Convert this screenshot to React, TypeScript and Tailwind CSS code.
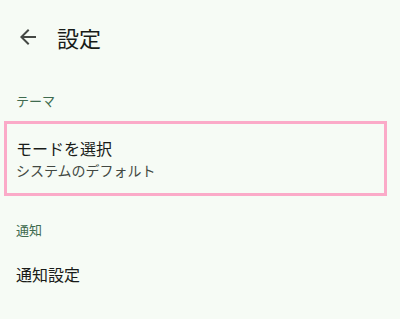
const font = { fontFamily: '"Noto Sans CJK JP", "Noto Sans", sans-serif' };

const BackArrow = () => (
  <svg viewBox="0 0 24 24" className="w-6 h-6" fill="#444844">
    <path d="M20 11H7.83l5.59-5.59L12 4l-8 8 8 8 1.41-1.41L7.83 13H20v-2z" />
  </svg>
);

export default function App() {
  return (
    <div className="w-[400px] h-[319px] bg-[#f6fbf5] overflow-hidden" style={font}>
      {/* top bar */}
      <div className="h-[74px] flex items-center pl-4">
        <BackArrow />
        <h1 className="ml-[17px] text-[22px] leading-7 text-[#191c19]">設定</h1>
      </div>

      {/* theme */}
      <div className="mt-[17px] h-5 px-4 text-[13px] leading-5 text-[#3f6b4f]">テーマ</div>
      <div className="mt-[10px] ml-1 w-[383px] h-[75px] border-[3px] border-[#fbaac8] pl-[9px] pt-3">
        <div className="text-base leading-6 text-[#191c19]">モードを選択</div>
        <div className="text-sm leading-5 text-[#424842]">システムのデフォルト</div>
      </div>

      {/* notifications */}
      <div className="mt-6 h-5 px-4 text-[13px] leading-5 text-[#3f6b4f]">通知</div>
      <div className="mt-[22px] px-4 text-base leading-6 text-[#191c19]">通知設定</div>
    </div>
  );
}
